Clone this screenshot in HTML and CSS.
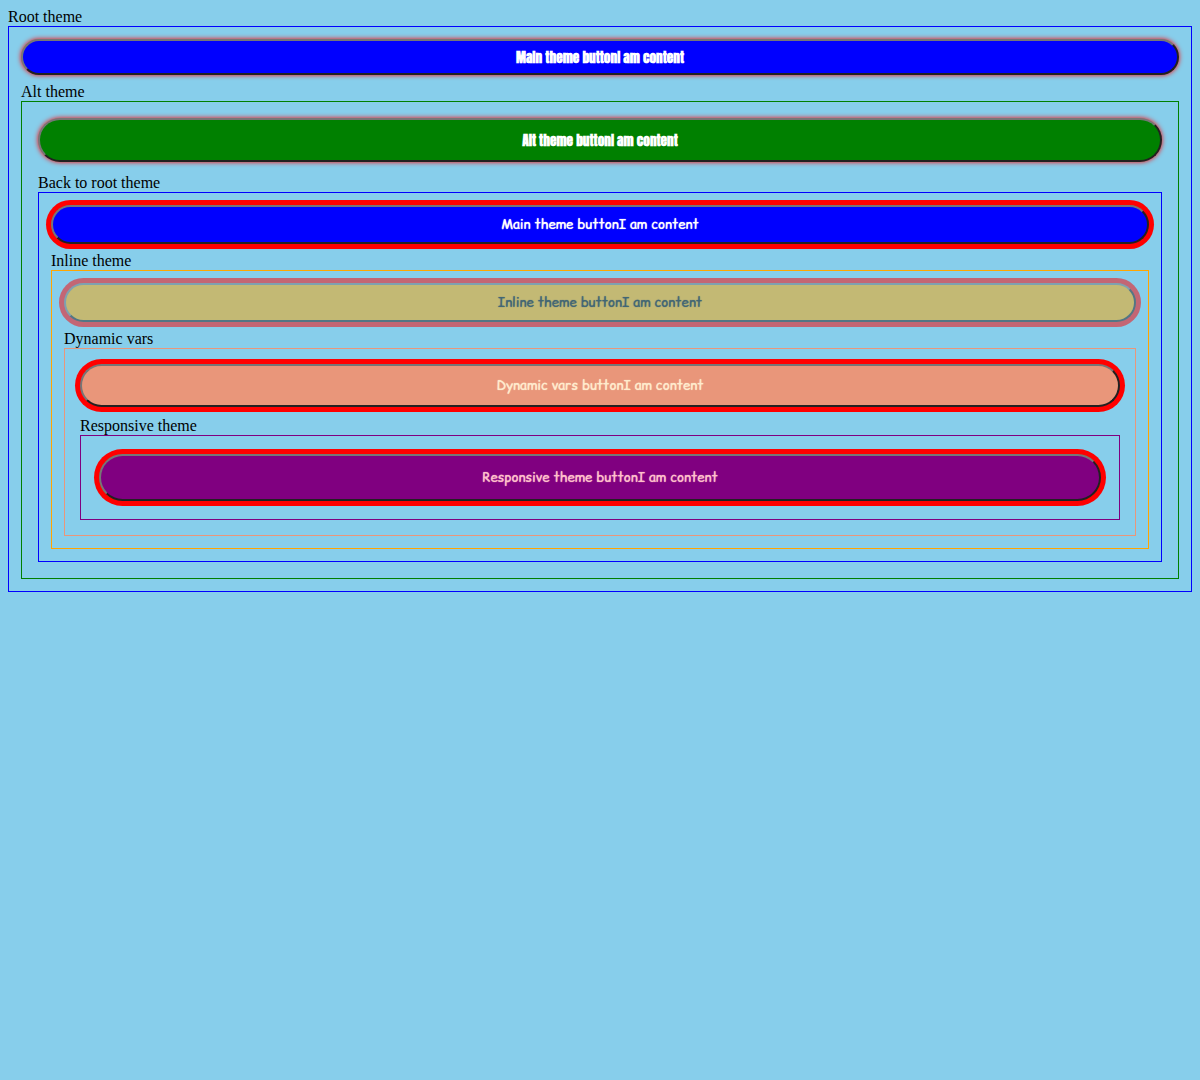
FILE: index.html
```
<!DOCTYPE html>
<html lang="en">
<head>
<meta charset="utf-8">
<title>Themes</title>
<link rel="stylesheet" href="styles.css">
</head>
<body>
<main>
<div class="frame">
  <div class="label">Root theme</div>
  <section class="theme main">
    <button class="button glow" type="button">Main theme button<span>I am content</span></button>
    <div class="label">Alt theme</div>
    <section class="theme alt">
      <button class="button glow" type="button">Alt theme button<span>I am content</span></button>
      <div class="label">Back to root theme</div>
      <section class="theme main">
        <button class="button ring" type="button">Main theme button<span>I am content</span></button>
        <div class="label">Inline theme</div>
        <section class="theme inline">
          <button class="button ring faded" type="button">Inline theme button<span>I am content</span></button>
          <div class="label">Dynamic vars</div>
          <section class="theme dynamic">
            <button class="button ring" type="button">Dynamic vars button<span>I am content</span></button>
            <div class="label">Responsive theme</div>
            <section class="theme responsive">
              <button class="button ring" type="button">Responsive theme button<span>I am content</span></button>
            </section>
          </section>
        </section>
      </section>
    </section>
  </section>
</div>
</main>
</body>
</html>
```
FILE: styles.css
```
body {
  margin: 8px;
  background: skyblue;
  color: black;
  font-family: "Liberation Serif", serif;
  font-size: 16px;
  line-height: 18px;
}

.frame {
  box-shadow: 0 0 5px red;
}

.theme {
  display: flex;
  flex-direction: column;
  border: 1px solid var(--color);
  padding: var(--space);
}

.main {
  --color: blue;
  --text: white;
  --space: 12px;
  --pad: 8px;
}

.alt {
  --color: green;
  --text: white;
  --space: 16px;
  --pad: 12px;
}

.inline {
  --color: orange;
  --text: black;
  --space: 12px;
  --pad: 8px;
}

.dynamic {
  --color: darksalmon;
  --text: blanchedalmond;
  --space: 15px;
  --pad: 10px;
}

.responsive {
  --color: purple;
  --text: pink;
  --space: 18px;
  --pad: 12px;
}

.button {
  border: 2px outset #767676;
  border-radius: 30px;
  padding: var(--pad);
  background: var(--color);
  color: var(--text);
  font-weight: bold;
}

.button + .label {
  margin-top: var(--pad);
}

.glow {
  box-shadow: 0 0 5px red;
  font-family: Impact, Anton, fantasy;
  line-height: 16px;
}

.ring {
  box-shadow: 0 0 0 5px red;
  font-family: "Comic Relief", "Comic Sans MS", cursive;
  font-weight: normal;
  line-height: 19px;
  text-shadow: 0 0 1px currentColor;
}

.faded {
  opacity: 0.5;
}
```
